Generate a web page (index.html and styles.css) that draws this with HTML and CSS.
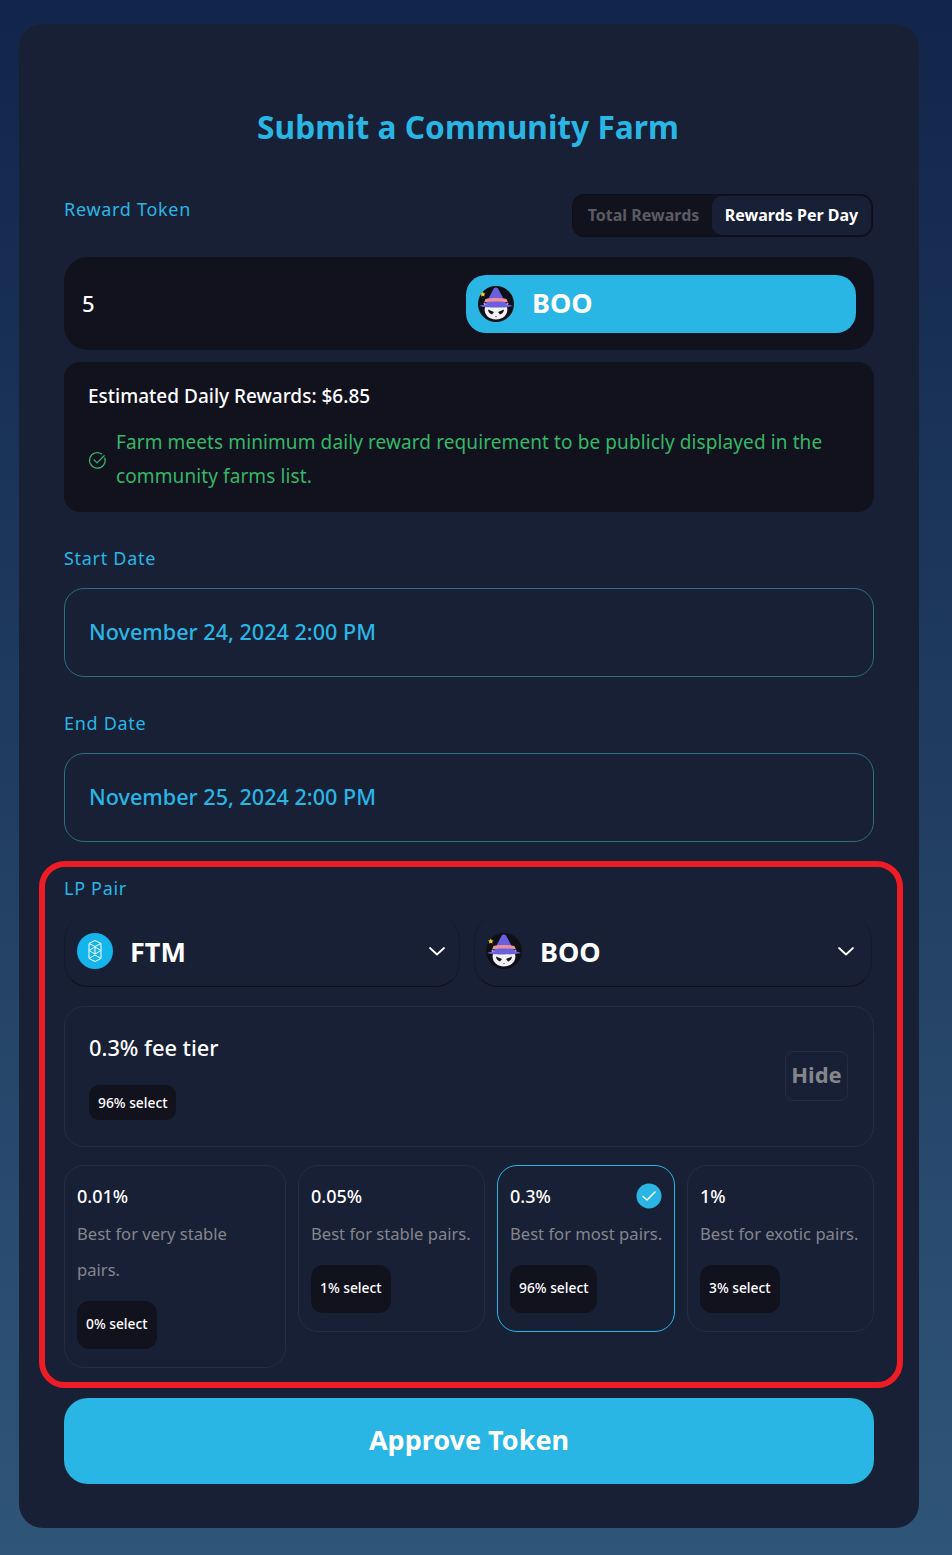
FILE: index.html
```html
<!DOCTYPE html>
<html lang="en">
<head>
    <meta charset="UTF-8">
    <meta name="viewport" content="width=device-width, initial-scale=1.0">
    <title>Submit a Community Farm</title>
    <link rel="stylesheet" href="styles.css">
</head>
<body>
    <svg class="defs" width="0" height="0">
        <symbol id="boo" viewBox="0 0 36 36">
            <circle cx="18" cy="18" r="18" fill="#0f0f18"/>
            <path d="M7 21 L5.500 17 L12 19 L24 19 L30.500 17 L29 21 C31 28 25 33.500 18 33.500 C11 33.500 5 28 7 21 Z" fill="#f2f2f6"/>
            <path d="M10 23.500 L16 26 L14 28.500 C12 28 10 26 10 23.500 Z M26 23.500 L20 26 L22 28.500 C24 28 26 26 26 23.500 Z" fill="#14141c"/>
            <path d="M17 30 h2 l-1 1 z" fill="#14141c"/>
            <path d="M7.500 18 L16 2 C17 1 19 1.500 20 2.500 L28.500 18 Z" fill="#6a5fdc"/>
            <path d="M1 20 C8 16.500 28 16.500 35 20 C28 22 8 22 1 20 Z" fill="#6a5fdc"/>
            <path d="M7.500 13 C13 11.800 23 11.800 28.500 13 L30 16.500 C23 15.200 13 15.200 6 16.500 Z" fill="#ef8f9c"/>
            <path d="M4.800 5.500 l.9 1.700 1.800 .3 -1.300 1.300 .3 1.800 -1.700-.8 -1.700 .8 .3-1.800 -1.300-1.300 1.800-.3 z" fill="#f5d020"/>
        </symbol>
    </svg>

    <main class="card">
        <h1>Submit a Community Farm</h1>

        <div class="label-row">
            <label>Reward Token</label>
            <div class="toggle">
                <span class="toggle-tab">Total Rewards</span>
                <span class="toggle-tab active">Rewards Per Day</span>
            </div>
        </div>

        <div class="amount-row">
            <span class="amount">5</span>
            <div class="token-btn">
                <svg class="token-icon"><use href="#boo"/></svg>
                <span>BOO</span>
            </div>
        </div>

        <div class="estimate">
            <p class="estimate-title">Estimated Daily Rewards: $6.85</p>
            <div class="estimate-note">
                <svg class="ok-icon" viewBox="0 0 20 20" fill="none" stroke="#34b866" stroke-width="1.300" stroke-linecap="round" stroke-linejoin="round">
                    <path d="M17.700 7.500 A8.200 8.200 0 1 1 14.500 3.100"/>
                    <path d="M6.500 9.500 L9.500 12.500 L17 5"/>
                </svg>
                <p>Farm meets minimum daily reward requirement to be publicly displayed in the community farms list.</p>
            </div>
        </div>

        <label class="date-label">Start Date</label>
        <div class="date-box"><span>November 24, 2024 2:00 PM</span></div>

        <label class="date-label">End Date</label>
        <div class="date-box"><span>November 25, 2024 2:00 PM</span></div>

        <section class="lp-section">
            <label>LP Pair</label>
            <div class="pair-row">
                <div class="pair-select">
                    <svg class="token-icon" viewBox="0 0 36 36">
                        <circle cx="18" cy="18" r="18" fill="#13b5ec"/>
                        <g fill="none" stroke="#fff" stroke-width="1" stroke-linejoin="round">
                            <path d="M18 7.500 L24 10.500 V25.500 L18 28.500 L12 25.500 V10.500 Z"/>
                            <path d="M12 10.500 L18 13.500 L24 10.500"/>
                            <path d="M12 17.500 L18 14 L24 17.500 L18 21 Z"/>
                            <path d="M18 14 V21"/>
                            <path d="M12 25.500 L18 22 L24 25.500"/>
                        </g>
                    </svg>
                    <span class="pair-name">FTM</span>
                    <svg class="chevron" viewBox="0 0 18 10" fill="none" stroke="#fff" stroke-width="1.800" stroke-linecap="round" stroke-linejoin="round"><path d="M2 2 L9 8.500 L16 2"/></svg>
                </div>
                <div class="pair-select">
                    <svg class="token-icon"><use href="#boo"/></svg>
                    <span class="pair-name">BOO</span>
                    <svg class="chevron" viewBox="0 0 18 10" fill="none" stroke="#fff" stroke-width="1.800" stroke-linecap="round" stroke-linejoin="round"><path d="M2 2 L9 8.500 L16 2"/></svg>
                </div>
            </div>

            <div class="fee-summary">
                <div>
                    <p class="fee-title">0.3% fee tier</p>
                    <span class="badge small">96% select</span>
                </div>
                <button class="hide-btn">Hide</button>
            </div>

            <div class="tiers">
                <div class="tier">
                    <p class="tier-value">0.01%</p>
                    <p class="tier-desc">Best for very stable<br>pairs.</p>
                    <span class="badge">0% select</span>
                </div>
                <div class="tier">
                    <p class="tier-value">0.05%</p>
                    <p class="tier-desc">Best for stable pairs.</p>
                    <span class="badge">1% select</span>
                </div>
                <div class="tier selected">
                    <svg class="tier-check" viewBox="0 0 26 26">
                        <circle cx="13" cy="13" r="12.500" fill="#29b6e5"/>
                        <path d="M7 13.500 L11 17 L19 9" fill="none" stroke="#fff" stroke-width="1.500" stroke-linecap="round" stroke-linejoin="round"/>
                    </svg>
                    <p class="tier-value">0.3%</p>
                    <p class="tier-desc">Best for most pairs.</p>
                    <span class="badge">96% select</span>
                </div>
                <div class="tier">
                    <p class="tier-value">1%</p>
                    <p class="tier-desc">Best for exotic pairs.</p>
                    <span class="badge">3% select</span>
                </div>
            </div>
        </section>

        <button class="approve-btn">Approve Token</button>
    </main>
</body>
</html>
```
FILE: styles.css
```css
* {
    margin: 0;
    padding: 0;
    box-sizing: border-box;
}

body {
    font-family: 'Noto Sans', 'Open Sans', sans-serif;
    background: linear-gradient(180deg, #12254b 0%, #2f5578 100%);
    min-height: 1555px;
    padding: 24px 33px 27px 19px;
    color: #fff;
}

.defs {
    position: absolute;
}

label {
    display: block;
    color: #29b6e5;
    font-size: 18px;
    line-height: 24px;
    letter-spacing: 0.7px;
}

.card {
    background: #182035;
    border-radius: 24px;
    padding: 84px 45px 44px;
    height: 1504px;
}

h1 {
    text-align: center;
    color: #29b6e5;
    font-size: 31.700px;
    line-height: 38px;
    font-weight: 700;
    margin-bottom: 48px;
    margin-right: 2px;
}

.label-row {
    display: flex;
    justify-content: space-between;
    align-items: flex-start;
    height: 63px;
}

.label-row label {
    margin-top: 3px;
}

.toggle {
    display: flex;
    width: 301px;
    height: 43px;
    margin-right: 1px;
    padding: 1px 1px 1px 2px;
    background: #12121f;
    border: 1px solid #0e0e18;
    border-radius: 12px;
}

.toggle-tab {
    display: flex;
    align-items: center;
    justify-content: center;
    flex: 1;
    font-size: 16px;
    font-weight: 700;
    color: #5b5b63;
    border-radius: 10px;
    padding-bottom: 1px;
}

.toggle-tab.active {
    flex: 0 0 159px;
    color: #fff;
    background: #182035;
}

.amount-row {
    display: flex;
    align-items: center;
    justify-content: space-between;
    height: 93px;
    padding: 0 18px;
    background: #12121f;
    border-radius: 24px;
}

.amount {
    font-size: 22px;
    font-weight: 500;
    margin-bottom: 2px;
}

.token-btn {
    display: flex;
    align-items: center;
    gap: 18px;
    width: 390px;
    height: 58px;
    padding-left: 12px;
    background: #29b6e5;
    border-radius: 20px;
    font-size: 27px;
    font-weight: 700;
}

.token-btn span {
    margin-bottom: 2px;
}

.token-icon {
    width: 36px;
    height: 36px;
    flex-shrink: 0;
}

.estimate {
    height: 150px;
    margin-top: 12px;
    padding: 20px 24px;
    background: #12121f;
    border-radius: 16px;
}

.estimate-title {
    font-size: 19px;
    line-height: 28px;
    font-weight: 500;
}

.estimate-note {
    display: flex;
    align-items: center;
    gap: 9px;
    margin-top: 15px;
    color: #34b866;
    font-size: 19px;
    letter-spacing: 0.1px;
    line-height: 34px;
}

.ok-icon {
    width: 19px;
    height: 19px;
    flex-shrink: 0;
    margin-top: 2px;
}

.date-label {
    margin-top: 34px;
    margin-bottom: 18px;
}

.date-box {
    display: flex;
    align-items: center;
    height: 89px;
    padding: 0 24px;
    border: 1px solid #2b6f80;
    border-radius: 20px;
    color: #29b6e5;
    font-size: 21.600px;
    font-weight: 500;
}

.date-box span {
    margin-bottom: 3px;
}

.lp-section {
    margin: 19px -29px 10px -25px;
    height: 527px;
    padding: 9px 23px 0 19px;
    border: 6px solid #ee1c25;
    border-radius: 26px;
}

.pair-row {
    display: grid;
    grid-template-columns: 396px 398px;
    gap: 14px;
    margin-top: 16px;
}

.pair-select {
    display: flex;
    align-items: center;
    height: 71px;
    padding: 0 13px 0 12px;
    border-bottom: 1px solid #0f0f1a;
    border-left: 1px solid #141a2b;
    border-right: 1px solid #141a2b;
    border-radius: 24px;
}

.pair-select + .pair-select {
    padding: 0 16px 0 11px;
}

.pair-name {
    flex: 1;
    margin-left: 17px;
    font-size: 27px;
    font-weight: 700;
}

.pair-select + .pair-select .pair-name {
    margin-left: 18px;
}

.chevron {
    width: 18px;
    height: 10px;
}

.fee-summary {
    display: flex;
    align-items: center;
    justify-content: space-between;
    height: 141px;
    margin-top: 19px;
    padding: 0 25px 0 24px;
    border: 1px solid #262d42;
    border-radius: 20px;
}

.fee-title {
    font-size: 21.800px;
    line-height: 30px;
    font-weight: 500;
    margin-bottom: 22px;
}

.badge {
    display: inline-flex;
    align-items: center;
    padding: 0 9px 3px;
    height: 48px;
    background: #12121f;
    border-radius: 12px;
    font-size: 13.800px;
    font-weight: 500;
}

.badge.small {
    height: 35px;
    border-radius: 10px;
    padding-bottom: 1px;
}

.hide-btn {
    width: 63px;
    height: 50px;
    margin-bottom: 1px;
    padding-bottom: 5px;
    font-family: inherit;
    font-size: 22px;
    font-weight: 700;
    color: #85858d;
    background: none;
    border: 1px solid #262d42;
    border-radius: 8px;
}

.tiers {
    display: grid;
    grid-template-columns: 222px 187px 178px 187px;
    gap: 12px;
    align-items: start;
    margin-top: 18px;
}

.tier {
    position: relative;
    padding: 16px 12px 18px;
    border: 1px solid #262d42;
    border-radius: 20px;
}

.tier.selected {
    border-color: #29b6e5;
}

.tier-check {
    position: absolute;
    top: 17px;
    right: 12px;
    width: 26px;
    height: 26px;
}

.tier-value {
    font-size: 18px;
    line-height: 28px;
    font-weight: 500;
}

.tier-desc {
    margin-top: 6px;
    margin-bottom: 13px;
    color: #85858d;
    font-size: 16.600px;
    line-height: 36px;
    white-space: nowrap;
}

.approve-btn {
    display: block;
    width: 100%;
    height: 86px;
    padding-bottom: 4px;
    font-family: inherit;
    font-size: 27px;
    font-weight: 700;
    color: #fff;
    background: #29b6e5;
    border: none;
    border-radius: 24px;
}
```
